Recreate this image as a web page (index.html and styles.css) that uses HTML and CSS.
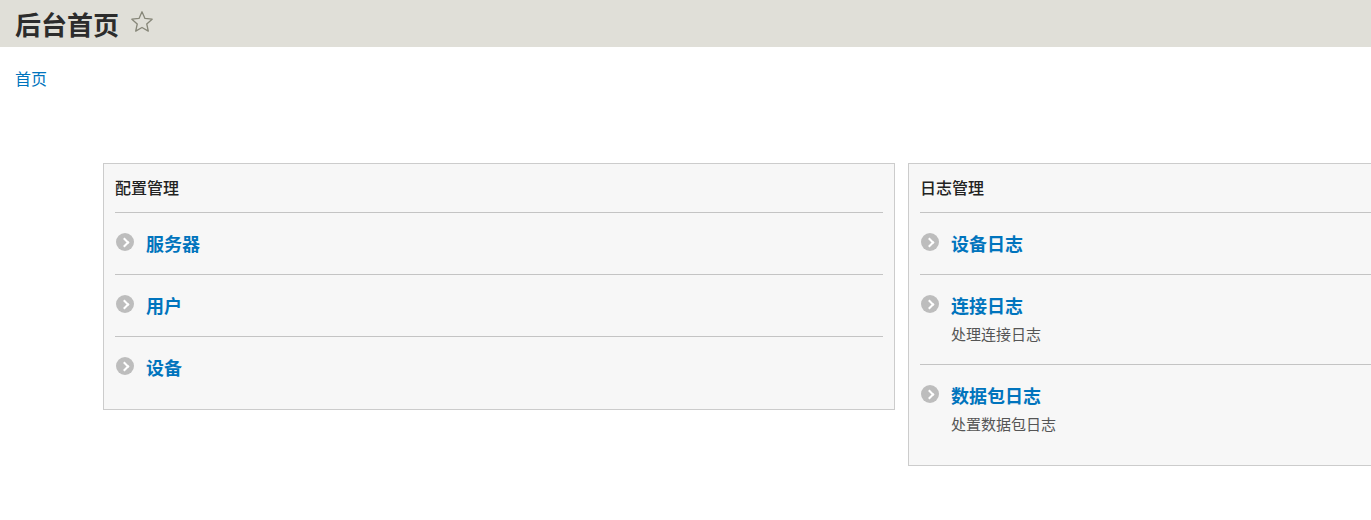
FILE: index.html
```html
<!DOCTYPE html>
<html lang="zh-CN">
<head>
<meta charset="utf-8">
<title>后台首页</title>
<link rel="stylesheet" href="styles.css">
</head>
<body>
<header class="page-header">
  <h1 class="page-title">后台首页</h1>
  <svg class="star" width="24" height="24" viewBox="0 0 24 24"><path d="M12 1.8l2.95 6.6 7.2.75-5.4 4.85 1.55 7.1L12 17.45 5.7 21.1l1.55-7.1-5.4-4.85 7.2-.75z" fill="none" stroke="#878779" stroke-width="1.3" stroke-linejoin="round"/></svg>
</header>
<nav class="breadcrumb"><a href="#">首页</a></nav>
<main class="panels">
  <section class="panel">
    <h3 class="panel-title">配置管理</h3>
    <ul class="items">
      <li class="item"><span class="arrow"></span><div class="item-body"><a class="item-link" href="#">服务器</a></div></li>
      <li class="item"><span class="arrow"></span><div class="item-body"><a class="item-link" href="#">用户</a></div></li>
      <li class="item"><span class="arrow"></span><div class="item-body"><a class="item-link" href="#">设备</a></div></li>
    </ul>
  </section>
  <section class="panel">
    <h3 class="panel-title">日志管理</h3>
    <ul class="items">
      <li class="item"><span class="arrow"></span><div class="item-body"><a class="item-link" href="#">设备日志</a></div></li>
      <li class="item"><span class="arrow"></span><div class="item-body"><a class="item-link" href="#">连接日志</a><p class="desc">处理连接日志</p></div></li>
      <li class="item"><span class="arrow"></span><div class="item-body"><a class="item-link" href="#">数据包日志</a><p class="desc">处置数据包日志</p></div></li>
    </ul>
  </section>
</main>
</body>
</html>
```
FILE: styles.css
```css
html, body {
  margin: 0;
  padding: 0;
  background: #fff;
  overflow: hidden;
}
body {
  font-family: "Noto Sans CJK SC", "Noto Sans", sans-serif;
  color: #333;
  width: 1371px;
  height: 520px;
}
.page-header {
  background: #e0dfd8;
  height: 47px;
  display: flex;
  align-items: center;
  padding-left: 15px;
}
.page-title {
  margin: 0;
  font-size: 26px;
  line-height: 46px;
  font-weight: bold;
  color: #2c2c2c;
}
.star {
  margin-left: 11px;
  margin-top: -3px;
}
.breadcrumb {
  padding: 18px 15px 0;
  font-size: 16px;
  line-height: 26px;
}
.breadcrumb a {
  color: #0074bd;
  text-decoration: none;
}
.panels {
  display: flex;
  gap: 13px;
  padding-left: 103px;
  margin-top: 72px;
  align-items: flex-start;
}
.panel {
  flex: 0 0 792px;
  box-sizing: border-box;
  border: 1px solid #ccc;
  background: #f7f7f7;
  padding: 0 11px 11px;
}
.panel-title {
  margin: 0;
  font-size: 16px;
  font-weight: 500;
  color: #222;
  line-height: 24px;
  padding: 11px 0 13px;
  border-bottom: 1px solid #c4c4c4;
}
.items {
  list-style: none;
  margin: 0;
  padding: 0;
}
.item {
  display: flex;
  padding: 18px 0 19px 1px;
  border-bottom: 1px solid #c4c4c4;
}
.item:last-child {
  border-bottom: none;
}
.arrow {
  flex: 0 0 18px;
  width: 18px;
  height: 18px;
  border-radius: 50%;
  background: #bdbdbd;
  margin-top: 2px;
  margin-right: 12px;
  position: relative;
}
.arrow::after {
  content: "";
  position: absolute;
  left: 5px;
  top: 5.5px;
  width: 5px;
  height: 5px;
  border-top: 2.2px solid #fff;
  border-right: 2.2px solid #fff;
  transform: rotate(45deg);
}
.item-link {
  display: block;
  font-size: 18px;
  line-height: 24px;
  font-weight: bold;
  color: #0074bd;
  text-decoration: none;
}
.desc {
  margin: 6px 0 0;
  font-size: 15px;
  line-height: 22px;
  color: #555;
}
```
